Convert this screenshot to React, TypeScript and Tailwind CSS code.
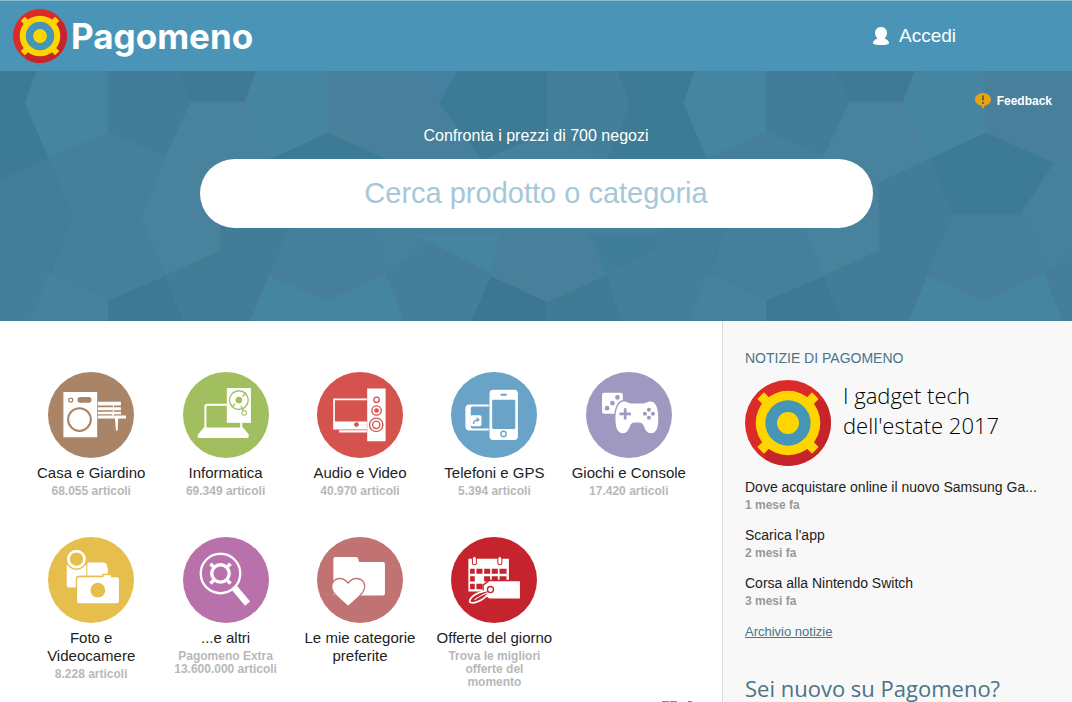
import React, { ReactNode } from "react";

type Category = {
  name: string;
  note?: string;
  color: string;
  viewBox: string;
  icon: ReactNode;
};

const categories: Category[] = [
  {
    name: "Casa e Giardino",
    note: "68.055 articoli",
    color: "bg-[#a98467]",
    viewBox: "85 37 257 257",
    icon: (
      <>
        <path fill="#fff" d="M131 97h101v135H131z" />
        <circle cx="153" cy="121" r="6" fill="none" stroke="#a98467" strokeWidth="4" />
        <rect x="173" y="112" width="42" height="17" rx="8" fill="#a98467" />
        <circle cx="179" cy="179" r="34" fill="none" stroke="#a98467" strokeWidth="6" />
        <path
          fill="#fff"
          d="M234 126h69v11h-69zM234 142h69v9h-69zM234 156h69v7h-69zM234 167h84v9h-84zM276 126h6v40h-6zM285 176h10l-2 36h-5z"
        />
        <path fill="#a98467" d="M276 137h3v5h-3zM276 151h3v5h-3z" />
      </>
    ),
  },
  {
    name: "Informatica",
    note: "69.349 articoli",
    color: "bg-[#a2bf60]",
    viewBox: "487 34 257 257",
    icon: (
      <>
        <path d="M554 204v-66q0-6 6-6h58M661 186v18" fill="none" stroke="#fff" strokeWidth="6" />
        <path fill="#fff" d="M549 200h117l17 20v8q0 3-3 3H534q-3 0-3-3v-6z" />
        <path fill="#fff" d="M618 82h72v104h-72z" />
        <g fill="none" stroke="#a2bf60">
          <circle cx="654" cy="118" r="28" strokeWidth="4" />
          <circle cx="670" cy="156" r="7" strokeWidth="3" />
          <path d="M660 136l8 14M633 139l10-10M665 107l11-11" strokeWidth="4" />
        </g>
        <circle cx="654" cy="118" r="10" fill="#a2bf60" />
      </>
    ),
  },
  {
    name: "Audio e Video",
    note: "40.970 articoli",
    color: "bg-[#d5534e]",
    viewBox: "82 34 257 257",
    icon: (
      <>
        <path d="M231 116h-98v87h98" fill="none" stroke="#fff" strokeWidth="5" />
        <path fill="#fff" d="M132 182h99v22h-99zM148 208h83v7h-83zM232 83h55v158h-55z" />
        <circle cx="200" cy="191" r="7" fill="#d5534e" />
        <circle cx="260" cy="149" r="7" fill="#d5534e" />
        <g fill="none" stroke="#d5534e" strokeWidth="4">
          <circle cx="260" cy="117" r="8" />
          <circle cx="260" cy="149" r="14" />
          <circle cx="259" cy="192" r="20" />
          <circle cx="259" cy="192" r="11" />
        </g>
      </>
    ),
  },
  {
    name: "Telefoni e GPS",
    note: "5.394 articoli",
    color: "bg-[#69a3c8]",
    viewBox: "485 34 257 257",
    icon: (
      <>
        <path fill="#fff" d="M598 131h-58q-12 0-12 12v54q0 12 12 12h58v-6h-48q-6 0-6-6v-54q0-6 6-6h48z" />
        <rect x="543" y="163" width="33" height="33" rx="5" fill="#fff" />
        <path d="M552 189q1-12 13-12" fill="none" stroke="#69a3c8" strokeWidth="4" />
        <path fill="#69a3c8" d="M562 169l9 8-9 8z" />
        <rect x="600" y="87" width="85" height="150" rx="11" fill="#fff" />
        <rect x="608" y="117" width="69" height="87" rx="3" fill="#69a3c8" />
        <rect x="633" y="99" width="19" height="6" rx="3" fill="#69a3c8" />
        <circle cx="642" cy="219" r="8" fill="none" stroke="#69a3c8" strokeWidth="4" />
      </>
    ),
  },
  {
    name: "Giochi e Console",
    note: "17.420 articoli",
    color: "bg-[#9f99c1]",
    viewBox: "76 37 257 257",
    icon: (
      <>
        <rect x="124" y="99" width="62" height="63" rx="6" fill="#fff" />
        <g fill="#9f99c1">
          <circle cx="170" cy="113" r="7" />
          <circle cx="155" cy="130" r="7" />
          <circle cx="139" cy="145" r="7" />
        </g>
        <path
          d="M190 123c10 0 13 6 20 6h37c7 0 11-6 21-6 20 0 26 26 26 54 0 30-8 45-23 45-17 0-20-14-25-25-3-7-5-7-10-7h-15c-6 0-8 1-11 8-5 11-9 24-24 24-16 0-24-16-24-45 0-28 8-54 28-54z"
          fill="#fff"
          stroke="#9f99c1"
          strokeWidth="4"
        />
        <path d="M193 145v34M176 162h34" stroke="#9f99c1" strokeWidth="8" />
        <g fill="#9f99c1">
          <circle cx="264" cy="150" r="6" />
          <circle cx="264" cy="174" r="6" />
          <circle cx="252" cy="162" r="6" />
          <circle cx="276" cy="162" r="6" />
        </g>
      </>
    ),
  },
  {
    name: "Foto e Videocamere",
    note: "8.228 articoli",
    color: "bg-[#e5be4d]",
    viewBox: "85 34 257 257",
    icon: (
      <>
        <path fill="#fff" d="M141 118h60v-2q0-6 6-6h44q6 0 9 6l4 14v20H180v35h-34q-5 0-5-6z" />
        <path d="M201 112v40" stroke="#e5be4d" strokeWidth="3" />
        <circle cx="170" cy="100" r="30" fill="#fff" stroke="#e5be4d" strokeWidth="4" />
        <circle cx="170" cy="100" r="20" fill="#e5be4d" />
        <path
          d="M178 152h71v-6h26v6h16q8 0 8 8v67q0 7-8 7H178q-8 0-8-7v-67q0-8 8-8z"
          fill="#fff"
          stroke="#e5be4d"
          strokeWidth="4"
        />
        <circle cx="234" cy="193" r="22" fill="#e5be4d" />
      </>
    ),
  },
  {
    name: "...e altri",
    note: "Pagomeno Extra 13.600.000 articoli",
    color: "bg-[#b971ac]",
    viewBox: "486 37 257 257",
    icon: (
      <>
        <circle cx="598" cy="146" r="59" fill="none" stroke="#fff" strokeWidth="7" />
        <circle cx="598" cy="146" r="26" fill="none" stroke="#fff" strokeWidth="10" />
        <path
          d="M568 117l9 9M628 117l-9 9M568 176l9-9M628 176l-9-9"
          stroke="#fff"
          strokeWidth="11"
        />
        <path d="M639 188l40 48" stroke="#fff" strokeWidth="20" />
      </>
    ),
  },
  {
    name: "Le mie categorie preferite",
    color: "bg-[#c17273]",
    viewBox: "82 37 257 257",
    icon: (
      <>
        <path fill="#fff" d="M137 97h61q6 0 7 5l3 10h71q6 0 6 6v88q0 6-6 6H137q-6 0-6-6V103q0-6 6-6z" />
        <path
          d="M175 245c-14-14-37-30-45-45-12-24 5-39 20-39 12 0 19 6 25 14 6-8 13-14 25-14 17 0 32 16 20 39-8 15-31 31-45 45z"
          fill="#fff"
          stroke="#c17273"
          strokeWidth="4"
        />
      </>
    ),
  },
  {
    name: "Offerte del giorno",
    note: "Trova le migliori offerte del momento",
    color: "bg-[#c5242e]",
    viewBox: "484 37 257 257",
    icon: (
      <>
        <path fill="#fff" d="M536 102h121v98H536z" />
        <path
          fill="#c5242e"
          d="M541 132h14v15h-14zM560 132h18v15h-18zM583 132h18v15h-18zM606 132h18v15h-18zM629 132h21v15h-21zM541 154h14v16h-14zM583 154h18v16h-18zM606 154h18v16h-18zM629 154h21v16h-21zM541 177h14v16h-14zM560 177h18v16h-18z"
        />
        <g fill="#fff" stroke="#c5242e" strokeWidth="3">
          <rect x="548" y="95" width="12" height="25" rx="6" />
          <rect x="624" y="95" width="12" height="25" rx="6" />
        </g>
        <path d="M598 167h94v56h-94l-18-14v-28z" fill="#fff" stroke="#c5242e" strokeWidth="4" />
        <path
          d="M602 195c-26 4-56 14-62 32-2 8 10 8 22 4 18-6 32-20 40-36z"
          fill="#c5242e"
          stroke="#fff"
          strokeWidth="5"
        />
        <path d="M594 203c-14 6-28 12-40 22" fill="none" stroke="#fff" strokeWidth="3" />
        <circle cx="602" cy="194" r="9" fill="none" stroke="#c5242e" strokeWidth="4" />
      </>
    ),
  },
];

const news = [
  { title: "Dove acquistare online il nuovo Samsung Ga...", when: "1 mese fa" },
  { title: "Scarica l'app", when: "2 mesi fa" },
  { title: "Corsa alla Nintendo Switch", when: "3 mesi fa" },
];

// one tile of the hero pattern, repeated every 1912 units
const tiles: [string, string][] = [
  ["#3d7a94", "-122,0 107,0 73,95 140,255 0,322 -150,262 -82,95"],
  ["#4685a0", "107,0 313,0 313,180 140,255 73,95"],
  ["#437c98", "313,0 515,0 555,95 480,250 313,180"],
  ["#3e7a94", "515,0 745,0 710,92 555,92"],
  ["#48829c", "555,92 710,92 788,258 640,325 640,525 480,595 410,430 480,250"],
  ["#4685a0", "745,0 950,0 950,182 788,258 710,92"],
  ["#48809b", "950,0 1210,0 1275,95 1390,262 1120,262 950,182"],
  ["#4481a0", "1210,0 1330,0 1275,95"],
  ["#3d7a94", "951,182 1148,270 1048,422 855,422 788,258"],
  ["#3d7a94", "1330,0 1590,0 1590,180 1400,262 1275,95"],
  ["#447f9a", "1590,0 1790,0 1830,95 1762,262 1590,180"],
  ["#467f9b", "140,255 313,180 480,250 410,430 480,595 313,670 150,590 215,425"],
  ["#427e99", "0,322 140,255 215,425 140,590 0,540"],
  ["#47829c", "140,590 313,670 313,760 80,760"],
  ["#3d7993", "313,670 480,598 545,760 313,760"],
  ["#437c97", "480,598 640,525 640,325 788,258 855,422 780,598 715,760 545,760"],
  ["#467f9b", "855,422 1048,422 1090,480 1120,590 950,670 780,598"],
  ["#4685a0", "780,598 950,670 1120,590 1185,760 715,760"],
  ["#447e98", "1120,590 1250,500 1425,590 1355,760 1185,760"],
  ["#3c7791", "1425,598 1590,675 1590,760 1355,760"],
  ["#4685a0", "1200,478 1450,478 1425,590 1250,500"],
  ["#48809b", "1450,478 1710,478 1762,590 1590,675 1425,590"],
  ["#407d99", "1710,478 2100,478 2065,590 1910,525 1762,590"],
  ["#407b95", "1762,595 1815,760 1590,760 1590,675"],
  ["#447e99", "1762,595 1910,525 2065,595 1980,760 1815,760"],
];

const HeroPattern = () => (
  <svg
    className="absolute inset-0 h-full w-full"
    viewBox="0 3 3113 726"
    preserveAspectRatio="xMinYMin slice"
    aria-hidden="true"
  >
    {[-1912, 0, 1912].map((offset) => (
      <g key={offset} transform={`translate(${offset} 0)`}>
        {tiles.map(([fill, points]) => (
          <polygon key={points} points={points} fill={fill} />
        ))}
      </g>
    ))}
  </svg>
);

const Emblem = ({ className }: { className: string }) => (
  <svg className={className} viewBox="0 0 258 258" aria-hidden="true">
    <circle cx="129" cy="129" r="129" fill="#dc2a28" />
    <path d="M214 55l28 12A129 129 0 0 1 62 239l-8-30z" fill="#c5242b" />
    <g fill="#ffd500">
      <circle cx="129" cy="129" r="97" />
      <rect x="115" y="13" width="28" height="232" rx="2" transform="rotate(45 129 129)" />
      <rect x="115" y="13" width="28" height="232" rx="2" transform="rotate(-45 129 129)" />
    </g>
    <circle cx="129" cy="129" r="68" fill="#4596b6" />
    <circle cx="129" cy="129" r="33" fill="#ffd500" />
  </svg>
);

const CategoryCard = ({ category }: { category: Category }) => (
  <a href="#" className="flex flex-col items-center text-center">
    <span className={`block size-[86px] rounded-full ${category.color}`}>
      <svg viewBox={category.viewBox} className="size-full" aria-hidden="true">
        {category.icon}
      </svg>
    </span>
    <span className="mt-1.5 max-w-[124px] text-[15px] leading-[18px] text-[#222]">
      {category.name}
    </span>
    {category.note && (
      <span className="mt-[3px] max-w-[104px] text-[12px] leading-[13px] font-bold text-[#b8b8b8]">
        {category.note}
      </span>
    )}
  </a>
);

const App = () => {
  return (
    <div className="flex h-screen flex-col overflow-hidden bg-white font-['Liberation_Sans',Arial,sans-serif]">
      <header className="flex h-[71px] shrink-0 items-center justify-between border-t border-[#86bccd] bg-[#4a95b7] pr-[116px] pl-[13px] text-white">
        <a href="#" className="flex items-center gap-1">
          <Emblem className="size-[54px]" />
          <span className="font-['Inter',sans-serif] text-[35px] leading-[48px] font-bold">
            Pagomeno
          </span>
        </a>
        <a href="#" className="flex items-center gap-2.5 text-[19px] leading-6">
          <svg className="h-[18px] w-4" viewBox="0 0 16 18" fill="#fff" aria-hidden="true">
            <path d="M8 0c4 0 6 3 6 6 0 2-1 4-2.500 5.500C14 12.500 16 14 16 16c0 1.500-3 2-8 2s-8-.5-8-2c0-2 2-3.500 4.500-4.500C3 10 2 8 2 6c0-3 2-6 6-6z" />
          </svg>
          Accedi
        </a>
      </header>

      <section className="relative h-[250px] shrink-0 bg-[#46819b]">
        <HeroPattern />
        <div className="relative flex flex-col items-center text-white">
          <a
            href="#"
            className="mt-5 mr-5 flex items-center gap-1.5 self-end text-[12px] leading-5 font-bold"
          >
            <svg className="size-4" viewBox="0 0 16 16" aria-hidden="true">
              <path
                d="M8 0c4.500 0 8 3 8 6.500 0 3-2.500 5.500-6 6L8 16l-2-3.500c-3.500-.5-6-3-6-6C0 3 3.500 0 8 0z"
                fill="#e6a412"
              />
              <path d="M8 2.500v5M8 9v2" stroke="#6d6a3c" strokeWidth="2" />
            </svg>
            Feedback
          </a>
          <label htmlFor="search" className="mt-[15px] text-[16px] leading-5">
            Confronta i prezzi di 700 negozi
          </label>
          <input
            id="search"
            type="text"
            placeholder="Cerca prodotto o categoria"
            className="mt-[13px] h-[69px] w-[673px] max-w-full rounded-full bg-white px-8 text-center text-[29px] text-[#333] outline-none placeholder:text-[#a5c8d8]"
          />
        </div>
      </section>

      <div className="flex min-h-0 flex-1">
        <main className="flex flex-1 flex-col pt-[51px]">
          <div className="grid grid-cols-5 gap-y-[39px] pr-[26px] pl-6">
            {categories.map((category) => (
              <CategoryCard key={category.name} category={category} />
            ))}
          </div>
          <div className="mt-auto mr-[30px] flex gap-px self-end" aria-hidden="true">
            <span className="h-px w-[7px] bg-[#6d8d9b]" />
            <span className="mr-2.5 h-px w-[7px] bg-[#6d8d9b]" />
            <span className="h-px w-1 bg-[#6d8d9b]" />
          </div>
        </main>

        <aside className="w-[350px] shrink-0 border-l border-[#d9d9d9] bg-[#f8f8f8] px-[22px] pt-7">
          <h2 className="text-[14px] leading-[18px] text-[#47758a] uppercase">
            Notizie di Pagomeno
          </h2>
          <a href="#" className="mt-[13px] flex gap-3">
            <Emblem className="size-[86px] shrink-0" />
            <span className="w-[170px] font-['Open_Sans',sans-serif] text-[22px] leading-[30px] font-light text-black">
              I gadget tech dell'estate 2017
            </span>
          </a>
          <ul className="mt-3 flex flex-col gap-3">
            {news.map((item) => (
              <li key={item.title}>
                <a href="#" className="block text-[14px] leading-[18px] text-[#222]">
                  {item.title}
                </a>
                <p className="text-[12px] leading-[18px] font-bold text-[#999]">{item.when}</p>
              </li>
            ))}
          </ul>
          <a
            href="#"
            className="mt-[13px] inline-block text-[13px] leading-[18px] text-[#47758a] underline"
          >
            Archivio notizie
          </a>
          <h2 className="mt-[33px] font-['Open_Sans',sans-serif] text-[22px] leading-6 text-[#4a7488]">
            Sei nuovo su Pagomeno?
          </h2>
        </aside>
      </div>
    </div>
  );
};

export default App;
